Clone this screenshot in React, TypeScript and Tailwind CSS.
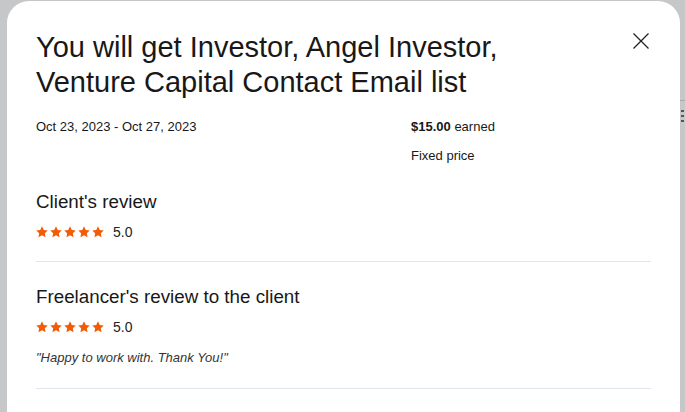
import React from "react";

function Stars() {
  return (
    <div className="flex items-center gap-[2px]">
      {[0, 1, 2, 3, 4].map((i) => (
        <svg key={i} width="12" height="12" viewBox="0 0 24 24" className="fill-[#f25c05]">
          <path d="M12 0.6l3.5 7.2 7.9 1.1-5.7 5.5 1.4 7.9L12 18.5l-7.1 3.8 1.4-7.9L.6 8.9l7.9-1.1z" />
        </svg>
      ))}
    </div>
  );
}

function Rating() {
  return (
    <div className="flex items-center gap-[9px] mt-[12px]">
      <Stars />
      <span className="text-[14px] leading-none text-[#222]">5.0</span>
    </div>
  );
}

export default function App() {
  return (
    <div
      className="relative h-[412px] w-[685px] overflow-hidden bg-[#c6c7c8]"
      style={{ fontFamily: '"Liberation Sans", Arial, sans-serif' }}
    >
      {/* page behind the dialog */}
      <div className="absolute right-0 top-[100px] h-px w-[6px] bg-[#a9aaab]" />
      <div className="absolute right-[1px] top-[110px] flex flex-col gap-[3px]">
        <span className="block h-[2px] w-[3px] bg-[#55575a]" />
        <span className="block h-[2px] w-[3px] bg-[#55575a]" />
        <span className="block h-[2px] w-[3px] bg-[#55575a]" />
      </div>

      <div className="pl-[7px] pr-[5px] pt-px">
        <div className="relative h-[420px] rounded-t-[22px] bg-white px-[29px] pt-[29px] text-[#181818]">
          <button className="absolute right-[31px] top-[32px] text-[#222]">
            <svg width="16" height="16" viewBox="0 0 16 16" fill="none" stroke="currentColor" strokeWidth="1.3">
              <path d="M0.5 0.5l15 15M15.5 0.5l-15 15" />
            </svg>
          </button>

          <h2 className="text-[29px] leading-[35px] font-normal">
            You will get Investor, Angel Investor,
            <br />
            Venture Capital Contact Email list
          </h2>

          <div className="mt-[19px] flex text-[13px] leading-[16px]">
            <div className="w-[375px]">Oct 23, 2023 - Oct 27, 2023</div>
            <div className="flex flex-col gap-[13px]">
              <div>
                <span className="font-bold">$15.00</span> earned
              </div>
              <div>Fixed price</div>
            </div>
          </div>

          <section className="mt-[27px] border-b border-[#e0e5ee] pb-[22px]">
            <h3 className="text-[18.8px] leading-[22px]">Client's review</h3>
            <Rating />
          </section>

          <section className="border-b border-[#e0e5ee] pt-[24px] pb-[22px]">
            <h3 className="text-[18.8px] leading-[22px]">Freelancer's review to the client</h3>
            <Rating />
            <p className="mt-[16px] text-[13px] italic leading-[16px] text-[#333]">
              "Happy to work with. Thank You!"
            </p>
          </section>
        </div>
      </div>
    </div>
  );
}
